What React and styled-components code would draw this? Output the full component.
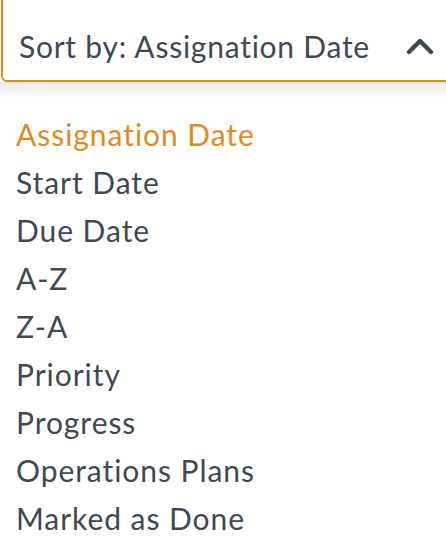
import React from "react";
import styled, { createGlobalStyle } from "styled-components";

const Global = createGlobalStyle`
  html, body { margin: 0; padding: 0; background: #fff; }
  body { font-family: Lato, "Noto Sans", sans-serif; overflow: hidden; }
`;

const Page = styled.div`
  width: 446px;
  height: 544px;
  overflow: hidden;
  background: #fff;
`;

const SelectBox = styled.div`
  display: flex;
  align-items: flex-start;
  justify-content: space-between;
  height: 92px;
  margin: -10px -6px 0 1px;
  padding: 36px 16px 0 16px;
  box-sizing: border-box;
  border: 2px solid #e08b1e;
  border-radius: 6px;
  background: #fff;
`;

const Label = styled.span`
  font-size: 30px;
  line-height: 36px;
  color: #3e4951;
  letter-spacing: 0.75px;
  font-variant-ligatures: none;
`;

const Chevron = styled.svg`
  width: 28px;
  height: 18px;
  margin-top: 9px;
  flex-shrink: 0;
`;

const Menu = styled.ul`
  list-style: none;
  margin: 0;
  padding: 28px 0 0 16px;
  background: linear-gradient(#e9e9e9 0px, #f4f4f4 7px, #fff 16px);
`;

const Item = styled.li`
  font-size: 30px;
  line-height: 48px;
  letter-spacing: 0.95px;
  font-variant-ligatures: none;
  color: ${(p) => (p.$active ? "#e08b1e" : "#3e4951")};
`;

const options = [
  "Assignation Date",
  "Start Date",
  "Due Date",
  "A-Z",
  "Z-A",
  "Priority",
  "Progress",
  "Operations Plans",
  "Marked as Done",
];

export default function App() {
  return (
    <Page>
      <Global />
      <SelectBox>
        <Label>Sort by: Assignation Date</Label>
        <Chevron viewBox="0 0 28 18">
          <path
            d="M3 15 L14 4 L25 15"
            fill="none"
            stroke="#3e4951"
            strokeWidth="4.4"
            strokeLinecap="round"
            strokeLinejoin="round"
          />
        </Chevron>
      </SelectBox>
      <Menu>
        {options.map((o, i) => (
          <Item key={o} $active={i === 0}>
            {o}
          </Item>
        ))}
      </Menu>
    </Page>
  );
}
